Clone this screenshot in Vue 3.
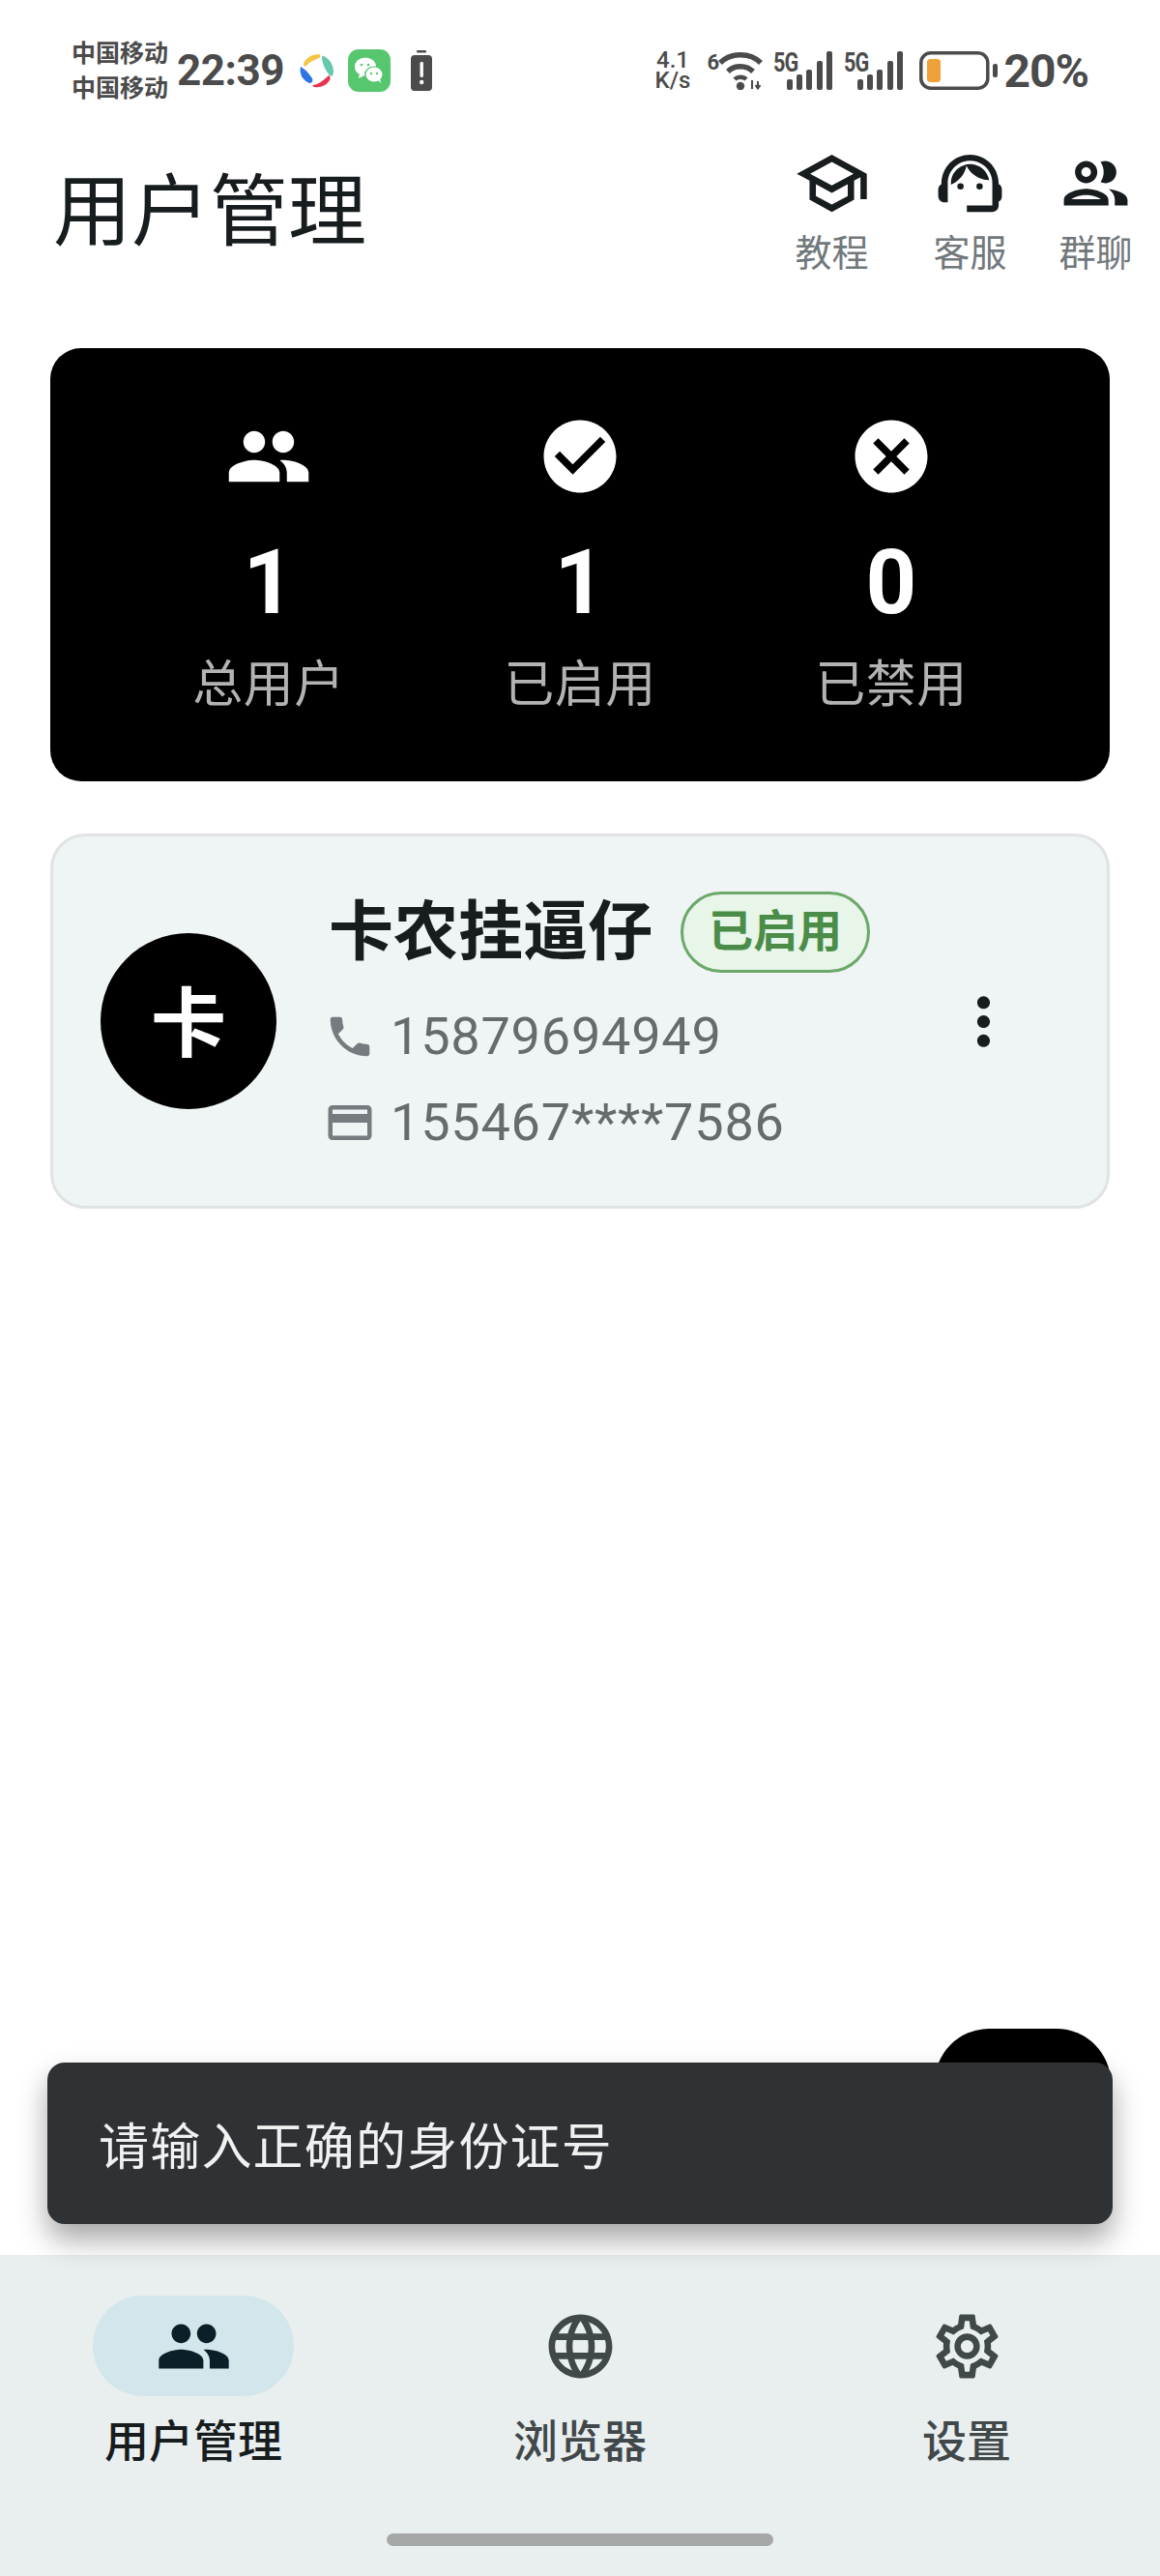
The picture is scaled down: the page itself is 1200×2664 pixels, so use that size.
<script setup>
const icons = {
  people: 'M16 11c1.66 0 2.99-1.34 2.99-3S17.66 5 16 5c-1.66 0-3 1.34-3 3s1.34 3 3 3zm-8 0c1.66 0 2.99-1.34 2.99-3S9.66 5 8 5C6.34 5 5 6.34 5 8s1.34 3 3 3zm0 2c-2.33 0-7 1.17-7 3.5V19h14v-2.5c0-2.33-4.67-3.5-7-3.5zm8 0c-.29 0-.62.02-.97.05 1.16.84 1.97 1.97 1.97 3.45V19h6v-2.5c0-2.33-4.67-3.5-7-3.5z',
  check: 'M12 2C6.48 2 2 6.48 2 12s4.48 10 10 10 10-4.48 10-10S17.52 2 12 2zm-2 15l-5-5 1.41-1.41L10 14.17l7.59-7.59L19 8l-9 9z',
  cancel: 'M12 2C6.47 2 2 6.47 2 12s4.47 10 10 10 10-4.47 10-10S17.53 2 12 2zm5 13.59L15.59 17 12 13.41 8.41 17 7 15.59 10.59 12 7 8.41 8.41 7 12 10.59 15.59 7 17 8.41 13.41 12 17 15.59z',
  school: 'M12 3L1 9l4 2.18v6L12 21l7-3.82v-6l2-1.09V17h2V9L12 3zm6.82 6L12 12.72 5.18 9 12 5.28 18.82 9zM17 15.99l-5 2.73-5-2.73v-3.72L12 15l5-2.73v3.72z',
  agent: 'M21 12.22C21 6.73 16.74 3 12 3c-4.69 0-9 3.65-9 9.28-.6.34-1 .98-1 1.72v2c0 1.1.9 2 2 2h1v-6.1c0-3.87 3.13-7 7-7s7 3.13 7 7V19h-8v2h8c1.1 0 2-.9 2-2v-1.22c.59-.31 1-.92 1-1.62v-2.3c0-.67-.41-1.28-1-1.64zM8 13a1 1 0 1 0 2 0 1 1 0 1 0-2 0zM14 13a1 1 0 1 0 2 0 1 1 0 1 0-2 0zM18 11.03C17.52 8.18 15.04 6 12.05 6c-3.03 0-6.29 2.51-6.03 6.45 2.47-1.01 4.33-3.21 4.86-5.89 1.31 2.63 4 4.44 7.12 4.47z',
  group: 'M9 13.75c-2.34 0-7 1.17-7 3.5V19h14v-1.75c0-2.33-4.66-3.5-7-3.5zM4.34 17c.84-.58 2.87-1.25 4.66-1.25s3.82.67 4.66 1.25H4.34zM9 12c1.93 0 3.5-1.57 3.5-3.5S10.93 5 9 5 5.5 6.57 5.5 8.5 7.07 12 9 12zm0-5c.83 0 1.5.67 1.5 1.5S9.83 10 9 10s-1.5-.67-1.5-1.5S8.17 7 9 7zm7.04 6.81c1.16.84 1.96 1.96 1.96 3.44V19h4v-1.75c0-2.02-3.5-3.17-5.96-3.44zM15 12c1.93 0 3.5-1.57 3.5-3.5S16.93 5 15 5c-.54 0-1.04.13-1.5.35.63.89 1 1.98 1 3.15s-.37 2.26-1 3.15c.46.22.96.35 1.5.35z',
  phone: 'M6.62 10.79c1.44 2.83 3.76 5.14 6.59 6.59l2.2-2.2c.27-.27.67-.36 1.02-.24 1.12.37 2.33.57 3.57.57.55 0 1 .45 1 1V20c0 .55-.45 1-1 1-9.39 0-17-7.61-17-17 0-.55.45-1 1-1h3.5c.55 0 1 .45 1 1 0 1.25.2 2.45.57 3.57.11.35.03.74-.25 1.02l-2.2 2.2z',
  card: 'M20 4H4c-1.11 0-1.99.89-1.99 2L2 18c0 1.11.89 2 2 2h16c1.11 0 2-.89 2-2V6c0-1.11-.89-2-2-2zm0 14H4v-6h16v6zm0-10H4V6h16v2z',
  more: 'M12 8c1.1 0 2-.9 2-2s-.9-2-2-2-2 .9-2 2 .9 2 2 2zm0 2c-1.1 0-2 .9-2 2s.9 2 2 2 2-.9 2-2-.9-2-2-2zm0 6c-1.1 0-2 .9-2 2s.9 2 2 2 2-.9 2-2-.9-2-2-2z',
  language: 'M11.99 2C6.47 2 2 6.48 2 12s4.47 10 9.99 10C17.52 22 22 17.52 22 12S17.52 2 11.99 2zm6.93 6h-2.95c-.32-1.25-.78-2.45-1.38-3.56 1.84.63 3.37 1.91 4.33 3.56zM12 4.04c.83 1.2 1.48 2.53 1.91 3.96h-3.82c.43-1.43 1.08-2.76 1.91-3.96zM4.26 14C4.1 13.36 4 12.69 4 12s.1-1.36.26-2h3.38c-.08.66-.14 1.32-.14 2 0 .68.06 1.34.14 2H4.26zm.82 2h2.95c.32 1.25.78 2.45 1.38 3.56-1.84-.63-3.37-1.9-4.33-3.56zm2.95-8H5.08c.96-1.66 2.49-2.93 4.33-3.56C8.81 5.55 8.35 6.75 8.03 8zM12 19.96c-.83-1.2-1.48-2.53-1.91-3.96h3.82c-.43 1.43-1.08 2.76-1.91 3.96zM14.34 14H9.66c-.09-.66-.16-1.32-.16-2 0-.68.07-1.35.16-2h4.68c.09.65.16 1.32.16 2 0 .68-.07 1.34-.16 2zm.25 5.56c.6-1.11 1.06-2.31 1.38-3.56h2.95c-.96 1.65-2.49 2.93-4.33 3.56zM16.36 14c.08-.66.14-1.32.14-2 0-.68-.06-1.34-.14-2h3.38c.16.64.26 1.31.26 2s-.1 1.36-.26 2h-3.38z',
  settings: 'M19.43 12.98c.04-.32.07-.64.07-.98 0-.34-.03-.66-.07-.98l2.11-1.65c.19-.15.24-.42.12-.64l-2-3.46c-.09-.16-.26-.25-.44-.25-.06 0-.12.01-.17.03l-2.49 1c-.52-.4-1.08-.73-1.69-.98l-.38-2.65C14.46 2.18 14.25 2 14 2h-4c-.25 0-.46.18-.49.42l-.38 2.65c-.61.25-1.17.59-1.69.98l-2.49-1c-.06-.02-.12-.03-.18-.03-.17 0-.34.09-.43.25l-2 3.46c-.13.22-.07.49.12.64l2.11 1.65c-.04.32-.07.65-.07.98 0 .33.03.66.07.98l-2.11 1.65c-.19.15-.24.42-.12.64l2 3.46c.09.16.26.25.44.25.06 0 .12-.01.17-.03l2.49-1c.52.4 1.08.73 1.69.98l.38 2.65c.03.24.24.42.49.42h4c.25 0 .46-.18.49-.42l.38-2.65c.61-.25 1.17-.59 1.69-.98l2.49 1c.06.02.12.03.18.03.17 0 .34-.09.43-.25l2-3.46c.12-.22.07-.49-.12-.64l-2.11-1.65zm-1.98-1.71c.04.31.05.52.05.73 0 .21-.02.43-.05.73l-.14 1.13.89.7 1.08.84-.7 1.21-1.27-.51-1.04-.42-.9.68c-.43.32-.84.56-1.25.73l-1.06.43-.16 1.13-.2 1.35h-1.4l-.19-1.35-.16-1.13-1.06-.43c-.43-.18-.83-.41-1.23-.71l-.91-.7-1.06.43-1.27.51-.7-1.21 1.08-.84.89-.7-.14-1.13c-.03-.31-.05-.54-.05-.74s.02-.43.05-.73l.14-1.13-.89-.7-1.08-.84.7-1.21 1.27.51 1.04.42.9-.68c.43-.32.84-.56 1.25-.73l1.06-.43.16-1.13.2-1.35h1.39l.19 1.35.16 1.13 1.06.43c.43.18.83.41 1.23.71l.91.7 1.06-.43 1.27-.51.7 1.21-1.07.85-.89.7.14 1.13zM12 8c-2.21 0-4 1.79-4 4s1.79 4 4 4 4-1.79 4-4-1.79-4-4-4zm0 6c-1.1 0-2-.9-2-2s.9-2 2-2 2 .9 2 2-.9 2-2 2z'
}

const actions = [
  { label: '教程', icon: icons.school },
  { label: '客服', icon: icons.agent },
  { label: '群聊', icon: icons.group }
]

const stats = [
  { label: '总用户', value: 1, icon: icons.people },
  { label: '已启用', value: 1, icon: icons.check },
  { label: '已禁用', value: 0, icon: icons.cancel }
]

const tabs = [
  { label: '用户管理', icon: icons.people, active: true },
  { label: '浏览器', icon: icons.language },
  { label: '设置', icon: icons.settings }
]

const signalBars = [
  { x: 14, top: 29 },
  { x: 24, top: 24 },
  { x: 34, top: 19 },
  { x: 45, top: 10 },
  { x: 55, top: 0 }
]
</script>

<template>
  <div class="page">
    <div class="status-bar">
      <div class="status-left">
        <div class="carrier">
          <span>中国移动</span>
          <span>中国移动</span>
        </div>
        <span class="clock">22:39</span>
        <svg class="petals" width="36" height="36" viewBox="0 0 36 36">
          <path d="M4 11C6 5 13 1 20 1c2 1 2 3 0 4-4 2-9 3-13 8-2 1-3 0-3-2z" fill="#f5c443" />
          <path d="M25 3c6 3 10 9 10 16 0 4-2 6-4 4-3-4-7-10-8-17 0-3 1-4 2-3z" fill="#66c9ae" />
          <path d="M1 14c4 2 8 6 12 12 1 3 0 5-3 5C4 29-1 22 1 14z" fill="#2f74e4" />
          <path d="M14 33c6-1 11-5 16-10 2 1 2 3 1 5-3 5-9 8-16 7-2-1-2-2-1-2z" fill="#e8344f" />
        </svg>
        <svg class="wechat" width="44" height="44" viewBox="0 0 44 44">
          <rect width="44" height="44" rx="11" fill="#56c76f" />
          <ellipse cx="18" cy="18" rx="11" ry="9.5" fill="#fff" />
          <path d="M12 25l-1 5 6-3z" fill="#fff" />
          <ellipse cx="27" cy="26" rx="10" ry="8.5" fill="#56c76f" />
          <ellipse cx="27" cy="26" rx="8.5" ry="7.5" fill="#fff" />
          <path d="M31 32l3 3-1-5z" fill="#fff" />
          <circle cx="14" cy="16" r="1.3" fill="#56c76f" />
          <circle cx="21" cy="16" r="1.3" fill="#56c76f" />
          <circle cx="24" cy="25" r="1.2" fill="#56c76f" />
          <circle cx="30" cy="25" r="1.2" fill="#56c76f" />
        </svg>
        <svg class="battery-alert" width="24" height="42" viewBox="0 0 24 42">
          <rect x="7" y="0" width="10" height="2.5" rx="1" fill="#4b4b4b" />
          <rect x="1" y="5" width="22" height="37" rx="4" fill="#4b4b4b" />
          <rect x="10.5" y="12" width="3.4" height="16" rx="1.4" fill="#fff" />
          <circle cx="12.2" cy="33" r="2.2" fill="#fff" />
        </svg>
      </div>
      <div class="status-right">
        <div class="speed">
          <span>4.1</span>
          <span>K/s</span>
        </div>
        <div class="wifi">
          <span class="wifi-gen">6</span>
          <svg width="46" height="40" viewBox="0 0 46 40">
            <path d="M2 12C13 1 33 1 44 12" fill="none" stroke="#4b4b4b" stroke-width="5.5" />
            <path d="M10 21C17 14 29 14 36 21" fill="none" stroke="#4b4b4b" stroke-width="5.5" />
            <path d="M17 29C20 26 26 26 29 29" fill="none" stroke="#4b4b4b" stroke-width="4.5" />
            <circle cx="23" cy="36" r="4.2" fill="#4b4b4b" />
            <path d="M35 30v9M41 31v8M38.500 35l2.500 3.500 2.500-3.500" fill="none" stroke="#4b4b4b" stroke-width="2" />
          </svg>
        </div>
        <div v-for="n in 2" :key="n" class="signal">
          <span class="signal-type">5G</span>
          <svg width="62" height="40" viewBox="0 0 62 40">
            <rect v-for="bar in signalBars" :key="bar.x" :x="bar.x" :y="bar.top" width="6" :height="40 - bar.top" rx="2" fill="#4b4b4b" />
          </svg>
        </div>
        <svg class="battery" width="82" height="40" viewBox="0 0 82 40">
          <rect x="1.800" y="1.800" width="69" height="36.400" rx="10" fill="none" stroke="#4b4b4b" stroke-width="3.500" />
          <rect x="8" y="8" width="14" height="24" rx="3.500" fill="#f0a23a" />
          <rect x="76" y="13" width="5" height="14" rx="2" fill="#4b4b4b" />
        </svg>
        <span class="percent">20%</span>
      </div>
    </div>

    <header class="top">
      <h1>用户管理</h1>
      <div class="top-actions">
        <div v-for="action in actions" :key="action.label" class="top-action">
          <svg width="79" height="79" viewBox="0 0 24 24"><path :d="action.icon" /></svg>
          <span>{{ action.label }}</span>
        </div>
      </div>
    </header>

    <section class="stats">
      <div v-for="stat in stats" :key="stat.label" class="stat">
        <svg width="90" height="90" viewBox="0 0 24 24"><path :d="stat.icon" /></svg>
        <div class="stat-value">{{ stat.value }}</div>
        <div class="stat-label">{{ stat.label }}</div>
      </div>
    </section>

    <section class="user-card">
      <div class="avatar"><span>卡</span></div>
      <div class="user-info">
        <div class="user-title">
          <span class="user-name">卡农挂逼仔</span>
          <span class="badge">已启用</span>
        </div>
        <div class="user-line phone-line">
          <svg width="54" height="54" viewBox="0 0 24 24"><path :d="icons.phone" /></svg>
          <span>15879694949</span>
        </div>
        <div class="user-line id-line">
          <svg width="54" height="54" viewBox="0 0 24 24"><path :d="icons.card" /></svg>
          <span>155467****7586</span>
        </div>
      </div>
      <svg class="more" width="79" height="79" viewBox="0 0 24 24"><path :d="icons.more" /></svg>
    </section>

    <nav class="tabs">
      <div class="tab-row">
        <div v-for="tab in tabs" :key="tab.label" class="tab" :class="{ active: tab.active }">
          <div class="tab-pill">
            <svg width="79" height="79" viewBox="0 0 24 24"><path :d="tab.icon" /></svg>
          </div>
          <span class="tab-label">{{ tab.label }}</span>
        </div>
      </div>
      <div class="home-bar"></div>
    </nav>

    <div class="fab"></div>
    <div class="toast">请输入正确的身份证号</div>
  </div>
</template>

<style>
body {
  margin: 0;
  background: #fff;
}
</style>

<style scoped>
.page {
  position: relative;
  width: 1200px;
  height: 2664px;
  overflow: hidden;
  display: flex;
  flex-direction: column;
  background: #fff;
  font-family: Roboto, "Noto Sans CJK SC", sans-serif;
  color: #171c1e;
}

.status-bar {
  height: 150px;
  box-sizing: border-box;
  padding: 42px 74px 0 74px;
  display: flex;
  justify-content: space-between;
  align-items: flex-start;
  color: #4b4b4b;
}

.status-left,
.status-right {
  display: flex;
  align-items: center;
  height: 62px;
}

.carrier {
  display: flex;
  flex-direction: column;
  gap: 11px;
  font-size: 25px;
  line-height: 25px;
  font-weight: 700;
}

.clock {
  margin-left: 9px;
  font-size: 44px;
  font-weight: 700;
  letter-spacing: -0.5px;
  line-height: 62px;
}

.petals {
  margin-left: 16px;
}

.wechat {
  margin-left: 14px;
}

.battery-alert {
  margin-left: 20px;
}

.speed {
  display: flex;
  flex-direction: column;
  align-items: center;
  font-size: 24px;
  line-height: 21px;
  font-weight: 500;
}

.wifi {
  display: flex;
  align-items: flex-start;
  margin-left: 17px;
  width: 58px;
  height: 40px;
}

.wifi svg {
  flex: none;
  margin-left: 1px;
}

.wifi-gen {
  font-size: 22px;
  line-height: 24px;
  font-weight: 700;
  width: 11px;
}

.signal {
  position: relative;
  width: 62px;
  height: 40px;
  margin-left: 11px;
}

.signal-type {
  position: absolute;
  left: 0;
  top: -2px;
  font-size: 27px;
  line-height: 28px;
  font-weight: 700;
  letter-spacing: -1px;
  transform: scaleX(0.8);
  transform-origin: left;
}

.battery {
  margin-left: 16px;
}

.percent {
  margin-left: 5px;
  font-size: 48px;
  font-weight: 700;
  letter-spacing: -1px;
}

.top {
  height: 210px;
  box-sizing: border-box;
  display: flex;
  justify-content: space-between;
  align-items: flex-start;
  padding-left: 55px;
}

.top h1 {
  margin: 16px 0 0;
  font-size: 81px;
  line-height: 108px;
  font-weight: 400;
}

.top-actions {
  display: flex;
  margin-right: 27px;
}

.top-action {
  display: flex;
  flex-direction: column;
  align-items: center;
  margin-left: 64px;
  width: 79px;
  font-size: 38px;
  line-height: 50px;
  color: #71787c;
}

.top-action span {
  margin-top: 8px;
}

.top-action svg {
  fill: #171c1e;
}

.top-action:nth-child(2) {
  margin-left: 64px;
}

.top-action:nth-child(3) {
  margin-left: 51px;
}

.stats {
  margin: 0 52px;
  height: 448px;
  box-sizing: border-box;
  padding: 67px 65px 0;
  border-radius: 32px;
  background: #000;
  color: #fff;
  display: grid;
  grid-template-columns: repeat(3, 1fr);
}

.stat {
  display: flex;
  flex-direction: column;
  align-items: center;
}

.stat svg {
  fill: #fff;
}

.stat-value {
  margin-top: 32px;
  font-size: 92px;
  line-height: 108px;
  font-weight: 700;
}

.stat-label {
  margin-top: 22px;
  font-size: 52px;
  line-height: 60px;
  letter-spacing: 0.5px;
  color: #b3b3b3;
}

.user-card {
  margin: 54px 52px 0;
  height: 388px;
  box-sizing: border-box;
  border: 3px solid #e0e3e4;
  border-radius: 36px;
  background: #eff4f5;
  display: flex;
  align-items: center;
  padding: 0 88px 0 49px;
}

.avatar {
  width: 182px;
  height: 182px;
  flex: none;
  border-radius: 50%;
  background: #000;
  color: #fff;
  font-size: 78px;
  font-weight: 700;
  display: flex;
  align-items: center;
  justify-content: center;
}

.avatar span {
  margin-top: -7px;
}

.user-info {
  flex: 1;
  margin-left: 54px;
}

.user-title {
  display: flex;
  align-items: center;
  height: 84px;
}

.user-name {
  font-size: 67px;
  line-height: 84px;
  font-weight: 700;
}

.badge {
  margin-left: 29px;
  height: 84px;
  box-sizing: border-box;
  padding: 0 26px;
  border: 3px solid #6ba869;
  border-radius: 42px;
  background: #e8f5e9;
  color: #4a8c48;
  font-size: 46px;
  font-weight: 700;
  line-height: 76px;
}

.user-line {
  display: flex;
  align-items: center;
  height: 60px;
  color: #666b6e;
  font-size: 54px;
  letter-spacing: 0.8px;
}

.user-line svg {
  margin-left: -5px;
  margin-right: 15px;
  fill: #757b7e;
}

.phone-line {
  margin-top: 36px;
}

.id-line {
  margin-top: 29px;
}

.more {
  flex: none;
  fill: #171c1e;
}

.tabs {
  margin-top: auto;
  height: 332px;
  box-sizing: border-box;
  padding-top: 42px;
  background: #e9eeef;
  display: flex;
  flex-direction: column;
  align-items: center;
}

.tab-row {
  width: 100%;
  display: grid;
  grid-template-columns: repeat(3, 1fr);
}

.tab {
  display: flex;
  flex-direction: column;
  align-items: center;
  color: #40484a;
}

.tab-pill {
  width: 208px;
  height: 104px;
  border-radius: 52px;
  display: flex;
  align-items: center;
  justify-content: center;
}

.tab-pill svg {
  fill: #40484a;
}

.tab.active .tab-pill {
  background: #d2e6ec;
}

.tab.active .tab-pill svg {
  fill: #0a1f27;
}

.tab-label {
  margin-top: 17px;
  font-size: 46px;
  line-height: 60px;
  font-weight: 500;
}

.tab.active {
  color: #171c1e;
}

.home-bar {
  margin-top: 65px;
  width: 400px;
  height: 13px;
  border-radius: 7px;
  background: #a6a8a8;
}

.fab {
  position: absolute;
  left: 967px;
  top: 2098px;
  width: 182px;
  height: 182px;
  border-radius: 56px;
  background: #000;
}

.toast {
  position: absolute;
  left: 49px;
  right: 49px;
  top: 2133px;
  height: 167px;
  box-sizing: border-box;
  padding: 0 53px;
  display: flex;
  align-items: center;
  border-radius: 18px;
  background: #2e3235;
  color: #f0f1f1;
  font-size: 52px;
  letter-spacing: 1.2px;
  box-shadow: 0 16px 30px rgba(0, 0, 0, 0.35);
}
</style>
